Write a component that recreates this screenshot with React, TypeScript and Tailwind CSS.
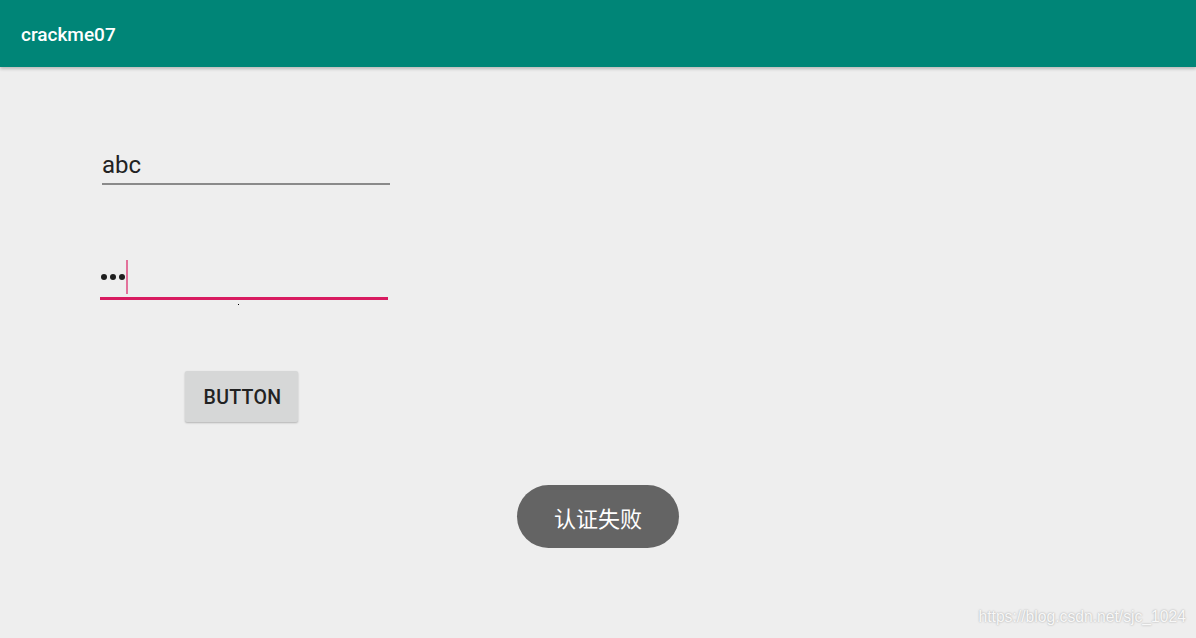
import React from "react";

export default function App() {
  return (
    <div className="w-[1196px] h-[638px] bg-[#eeeeee] flex flex-col overflow-hidden" style={{ fontFamily: "Roboto, 'Noto Sans', sans-serif" }}>
      <header className="h-[67px] bg-[#008577] flex items-center pl-[21px] shadow-[0_2px_3px_rgba(0,0,0,0.22)] relative z-10 shrink-0">
        <span className="text-white text-[19px] font-medium leading-none mt-[2px]">crackme07</span>
      </header>
      <main className="flex flex-col flex-1">
        {/* field 1 */}
        <div className="mt-[84px] ml-[102px] w-[288px] flex flex-col">
          <div className="h-[28px] leading-[28px] text-[24px] text-[#222222]">abc</div>
          <div className="mt-[4px] h-[2px] bg-[#8a8a8a]" />
        </div>
        {/* field 2 */}
        <div className="mt-[75px] ml-[100px] w-[288px] flex flex-col">
          <div className="h-[34px] flex items-center pl-[1px]">
            <div className="flex items-center gap-[3px]">
              <span className="w-[6px] h-[6px] rounded-full bg-[#1e1e1e]" />
              <span className="w-[6px] h-[6px] rounded-full bg-[#1e1e1e]" />
              <span className="w-[6px] h-[6px] rounded-full bg-[#1e1e1e]" />
            </div>
            <span className="ml-[1px] w-[2px] h-[34px] bg-[#e2719a]" />
          </div>
          <div className="mt-[3px] h-[3px] bg-[#d81b60]" />
        </div>
        <div className="mt-[4px] ml-[238px] w-px h-px bg-black" />
        {/* button */}
        <div className="mt-[66px] ml-[185px] w-[113px] h-[51px] bg-[#d6d7d7] rounded-[2px] shadow-[0_1px_2px_rgba(0,0,0,0.25)] flex items-center justify-center pl-[2px] pt-[3px]">
          <span className="text-[19.5px] font-medium text-[#222222] tracking-[0.3px] leading-none">BUTTON</span>
        </div>
        {/* toast */}
        <div className="mt-[63px] flex justify-center">
          <div className="w-[162px] h-[63px] rounded-full bg-[#646464] flex items-center justify-center">
            <span className="text-white text-[22px] leading-none" style={{ fontFamily: "'Noto Sans CJK SC', 'Noto Sans', sans-serif" }}>认证失败</span>
          </div>
        </div>
        {/* watermark */}
        <div className="mt-[60px] flex justify-end pr-[10px]">
          <span className="text-[15.7px] leading-[18px] text-[#f8f8f8] [text-shadow:0_0_2px_rgba(0,0,0,0.35)]" style={{ fontFamily: "'Liberation Sans', Arial, sans-serif" }}>https://blog.csdn.net/sjc_1024</span>
        </div>
      </main>
    </div>
  );
}
